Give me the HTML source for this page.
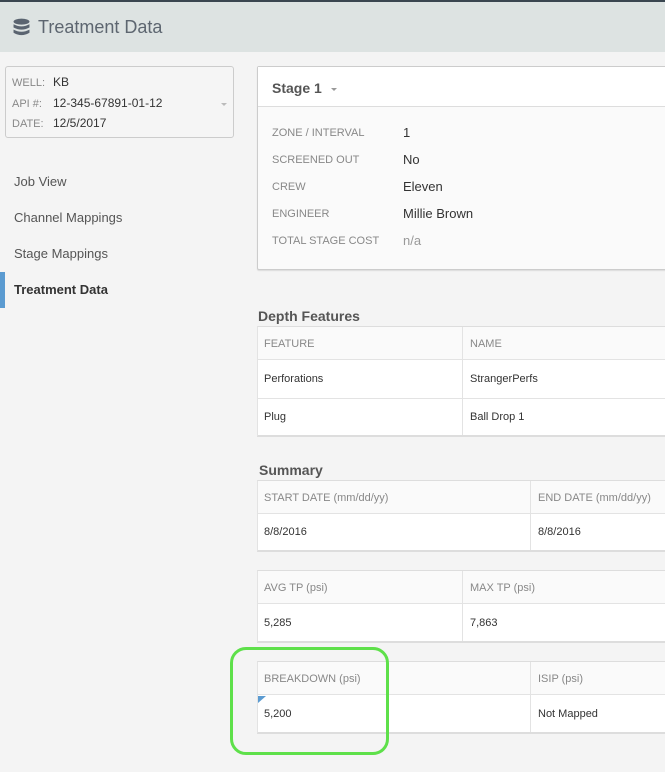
<!DOCTYPE html>
<html><head><meta charset="utf-8"><style>
*{margin:0;padding:0;box-sizing:border-box}
body{width:665px;height:772px;background:#f4f4f4;font-family:"Liberation Sans",Arial,sans-serif;position:relative;overflow:hidden;color:#333}
.a{position:absolute}
.hdr{left:0;top:0;width:665px;height:52px;background:#dde3e2;border-top:2px solid #3a4650}
.nav{left:14px;font-size:13px;color:#555}
.lbl{font-size:11px;color:#888;left:15px}
.val{font-size:13px;color:#333;left:145px}
.tbl{left:257px;width:410px;background:#fff;border-top:1px solid #ddd;border-left:1px solid #e3e3e3;border-bottom:2px solid #ddd}
.th{position:absolute;left:0;top:0;width:100%;height:33px;background:#fafafa;border-bottom:1px solid #e3e3e3}
.t{position:absolute;font-size:11px}
.h{color:#888}
.v{color:#333}
.vd{position:absolute;top:0;bottom:0;width:1px;background:#e3e3e3}
.title{left:258px;font-size:14px;font-weight:bold;color:#555}
</style></head><body>
<div class="a hdr"></div>
<svg class="a" style="left:13px;top:18px" width="17" height="20" viewBox="0 0 16 18"><g fill="#5a6470"><ellipse cx="8" cy="3" rx="7.5" ry="2.8"/><path d="M0.5 5.5 Q8 9.5 15.5 5.5 V8.5 Q8 12.5 0.5 8.5Z"/><path d="M0.5 10.5 Q8 14.5 15.5 10.5 V13.5 Q8 18 0.5 13.5Z"/></g></svg>
<div class="a" style="left:38px;top:17px;font-size:18px;color:#5d6670">Treatment Data</div>

<div class="a" style="left:5px;top:66px;width:229px;height:72px;background:#f5f5f5;border:1px solid #ccc;border-radius:3px"></div>
<div class="a" style="left:12px;top:73px;font-size:11px;color:#888;line-height:20.5px">WELL:<br>API #:<br>DATE:</div>
<div class="a" style="left:53px;top:72px;font-size:12px;color:#333;line-height:20.5px">KB<br>12-345-67891-01-12<br>12/5/2017</div>
<div class="a" style="left:221px;top:103px;width:0;height:0;border-left:3px solid transparent;border-right:3px solid transparent;border-top:3px solid #bbb"></div>

<div class="a nav" style="top:174px">Job View</div>
<div class="a nav" style="top:210px">Channel Mappings</div>
<div class="a nav" style="top:246px">Stage Mappings</div>
<div class="a" style="left:0;top:272px;width:5px;height:36px;background:#5b9bd1"></div>
<div class="a nav" style="top:282px;color:#333;font-weight:bold;font-size:13px">Treatment Data</div>

<div class="a" style="left:257px;top:66px;width:410px;height:204px;background:#fafafa;border:1px solid #ccc;border-radius:2px;box-shadow:0 1px 1px rgba(0,0,0,.1)">
 <div class="a" style="left:0;top:0;width:100%;height:40px;background:#fff;border-bottom:1px solid #ddd"></div>
 <div class="a" style="left:14px;top:13px;font-size:14px;font-weight:bold;color:#555">Stage 1</div>
 <div class="a" style="left:73px;top:21px;border-left:3px solid transparent;border-right:3px solid transparent;border-top:3px solid #999"></div>
 <div class="a lbl" style="left:14px;top:60px">ZONE / INTERVAL</div><div class="a val" style="top:58px">1</div>
 <div class="a lbl" style="left:14px;top:87px">SCREENED OUT</div><div class="a val" style="top:85px">No</div>
 <div class="a lbl" style="left:14px;top:114px">CREW</div><div class="a val" style="top:112px">Eleven</div>
 <div class="a lbl" style="left:14px;top:141px">ENGINEER</div><div class="a val" style="top:139px">Millie Brown</div>
 <div class="a lbl" style="left:14px;top:168px">TOTAL STAGE COST</div><div class="a val" style="top:166px;color:#999">n/a</div>
</div>

<div class="a title" style="top:308px">Depth Features</div>
<div class="a tbl" style="top:326px;height:111px">
 <div class="th"></div>
 <div class="a" style="left:0;top:71px;width:100%;height:1px;background:#e3e3e3"></div>
 <div class="vd" style="left:204px"></div>
 <div class="t h" style="left:6px;top:11px">FEATURE</div><div class="t h" style="left:212px;top:11px">NAME</div>
 <div class="t v" style="left:6px;top:46px">Perforations</div><div class="t v" style="left:212px;top:46px">StrangerPerfs</div>
 <div class="t v" style="left:6px;top:84px">Plug</div><div class="t v" style="left:212px;top:84px">Ball Drop 1</div>
</div>

<div class="a title" style="top:462px;left:259px">Summary</div>
<div class="a tbl" style="top:480px;height:72px">
 <div class="th"></div><div class="vd" style="left:272px"></div>
 <div class="t h" style="left:6px;top:11px">START DATE (mm/dd/yy)</div><div class="t h" style="left:280px;top:11px">END DATE (mm/dd/yy)</div>
 <div class="t v" style="left:6px;top:45px">8/8/2016</div><div class="t v" style="left:280px;top:45px">8/8/2016</div>
</div>
<div class="a tbl" style="top:570px;height:73px">
 <div class="th"></div><div class="vd" style="left:204px"></div>
 <div class="t h" style="left:6px;top:11px">AVG TP (psi)</div><div class="t h" style="left:212px;top:11px">MAX TP (psi)</div>
 <div class="t v" style="left:6px;top:46px">5,285</div><div class="t v" style="left:212px;top:46px">7,863</div>
</div>
<div class="a tbl" style="top:661px;height:73px">
 <div class="th"></div><div class="vd" style="left:272px"></div>
 <div class="a" style="left:0;top:34px;border-right:8px solid transparent;border-top:7px solid #5b9bd1"></div>
 <div class="t h" style="left:6px;top:11px">BREAKDOWN (psi)</div><div class="t h" style="left:280px;top:11px">ISIP (psi)</div>
 <div class="t v" style="left:6px;top:46px">5,200</div><div class="t v" style="left:280px;top:46px">Not Mapped</div>
</div>
<div class="a" style="left:230px;top:647px;width:159px;height:108px;border:3px solid #5ee04a;border-radius:16px"></div>
</body></html>
